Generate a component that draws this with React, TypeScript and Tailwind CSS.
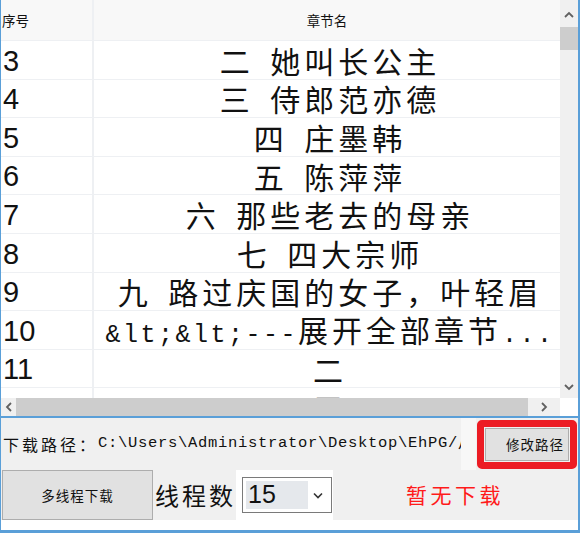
import React from "react";

const rows = [
  { no: "3", name: "二 她叫长公主" },
  { no: "4", name: "三 侍郎范亦德" },
  { no: "5", name: "四 庄墨韩" },
  { no: "6", name: "五 陈萍萍" },
  { no: "7", name: "六 那些老去的母亲" },
  { no: "8", name: "七 四大宗师" },
  { no: "9", name: "九 路过庆国的女子，叶轻眉" },
  { no: "10", name: "" },
  { no: "11", name: "二" },
  { no: "12", name: "三" },
];

const Arrow = ({ dir }: { dir: "up" | "down" | "left" | "right" }) => {
  const pts = {
    up: "1,6 5,2 9,6",
    down: "1,2 5,6 9,2",
    left: "6,1 2,5 6,9",
    right: "2,1 6,5 2,9",
  }[dir];
  const vertical = dir === "up" || dir === "down";
  return (
    <svg width={vertical ? 10 : 8} height={vertical ? 8 : 10} viewBox={vertical ? "0 0 10 8" : "0 0 8 10"}>
      <polyline points={pts} fill="none" stroke="#606060" strokeWidth="1.8" />
    </svg>
  );
};

export default function App() {
  return (
    <div className="w-[580px] h-[533px] bg-white flex flex-col border-l border-r-2 border-b-[3px] border-[#5a9fd8] overflow-hidden font-['Noto_Sans_CJK_SC',sans-serif] text-[#111]">
      {/* grid */}
      <div className="h-[416px] flex flex-col shrink-0">
        <div className="h-[398px] flex">
          <div className="flex-1 overflow-hidden">
            <div className="h-[41px] flex bg-[#f8f8f8] border-b border-[#eef0f3] text-[13.5px]">
              <div className="w-[93px] border-r-2 border-[#eef0f3] flex items-center pl-[1px]">序号</div>
              <div className="flex-1 flex items-center justify-center">章节名</div>
            </div>
            {rows.map((r) => (
              <div key={r.no} className="h-[38.6px] flex border-b border-[#eef0f3] shrink-0">
                <div className="w-[93px] border-r-2 border-[#eef0f3] flex items-center pl-[2px] pt-[3px] font-['Liberation_Sans',sans-serif] text-[29px]">
                  {r.no}
                </div>
                <div className="flex-1 flex items-center justify-center pt-[1px] text-[30px] tracking-[4px] whitespace-pre [word-spacing:6px] pl-[6px]">
                  {r.no === "10" ? (
                    <span>
                      <span className="font-['Liberation_Mono',monospace] text-[25px] tracking-[2.5px]">&amp;lt;&amp;lt;---</span>
                      展开全部章节
                      <span className="font-['Liberation_Mono',monospace] text-[25px] tracking-[2.5px]">...</span>
                    </span>
                  ) : (
                    r.name
                  )}
                </div>
              </div>
            ))}
          </div>
          {/* vertical scrollbar */}
          <div className="w-[18px] bg-[#f0f0f0] flex flex-col pt-[3px]">
            <div className="h-[24px] flex items-center justify-center">
              <Arrow dir="up" />
            </div>
            <div className="h-[23px] bg-[#cdcdcd]" />
            <div className="flex-1" />
            <div className="h-[22px] flex items-center justify-center">
              <Arrow dir="down" />
            </div>
          </div>
        </div>
        {/* horizontal scrollbar */}
        <div className="h-[18px] flex">
          <div className="flex-1 bg-[#f0f0f0] flex items-center">
            <div className="w-[15px] flex items-center justify-center">
              <Arrow dir="left" />
            </div>
            <div className="w-[512px] h-full bg-[#cdcdcd]" />
            <div className="flex-1 flex items-center justify-center">
              <Arrow dir="right" />
            </div>
          </div>
          <div className="w-[18px] bg-white" />
        </div>
      </div>
      <div className="h-[2px] bg-[#5a9fd8] shrink-0" />

      {/* bottom panel */}
      <div className="flex-1 flex flex-col bg-[#f0f0f0]">
        <div className="h-[52px] flex items-center">
          <div className="w-[460px] flex items-center whitespace-nowrap overflow-hidden pl-[2px] text-[#111]">
            <span className="text-[16px] tracking-[3px]">下载路径：</span>
            <span className="font-['Liberation_Mono',monospace] text-[15.5px] tracking-[0.7px]">C:\Users\Administrator\Desktop\EhPG/</span>
            <span className="text-[16px]">小说</span>
          </div>
          <div className="w-[15px] h-full bg-[#f7f7f7]" />
          <div className="w-[100px] h-[49px] ml-[1px] mt-[1px] rounded-[5px] border-[7px] border-[#ec1c24] bg-[#f0f0f0] p-[1px]">
            <div className="h-full bg-[#e1e1e1] border border-[#adadad] flex items-center justify-end pr-[4px] text-[13.5px] tracking-[1px]">
              修改路径
            </div>
          </div>
        </div>
        <div className="h-[50px] flex items-center">
          <div className="ml-[1px] w-[151px] h-[50px] bg-[#e1e1e1] border border-[#adadad] flex items-center justify-center text-[13.5px] tracking-[1px]">
            多线程下载
          </div>
          <div className="ml-[2px] text-[24px] tracking-[3px]">线程数</div>
          <div className="h-full bg-white flex items-center pl-[6px] pr-[1px]">
            <div className="w-[90px] h-[36px] border border-[#7a7a7a] bg-white flex items-center p-[3px]">
              <div className="w-[62px] h-full bg-[#e5e8ec] flex items-center pl-[2px] font-['Liberation_Sans',sans-serif] text-[25px]">
                15
              </div>
              <div className="flex-1 flex items-center justify-center">
                <svg width="10" height="7" viewBox="0 0 10 7">
                  <polyline points="1,1.5 5,5.5 9,1.5" fill="none" stroke="#333" strokeWidth="1.6" />
                </svg>
              </div>
            </div>
          </div>
          <div className="ml-[73px] text-[21px] tracking-[3.5px] text-[#ff1a1a]">暂无下载</div>
        </div>
        <div className="flex-1 bg-white" />
      </div>
    </div>
  );
}
